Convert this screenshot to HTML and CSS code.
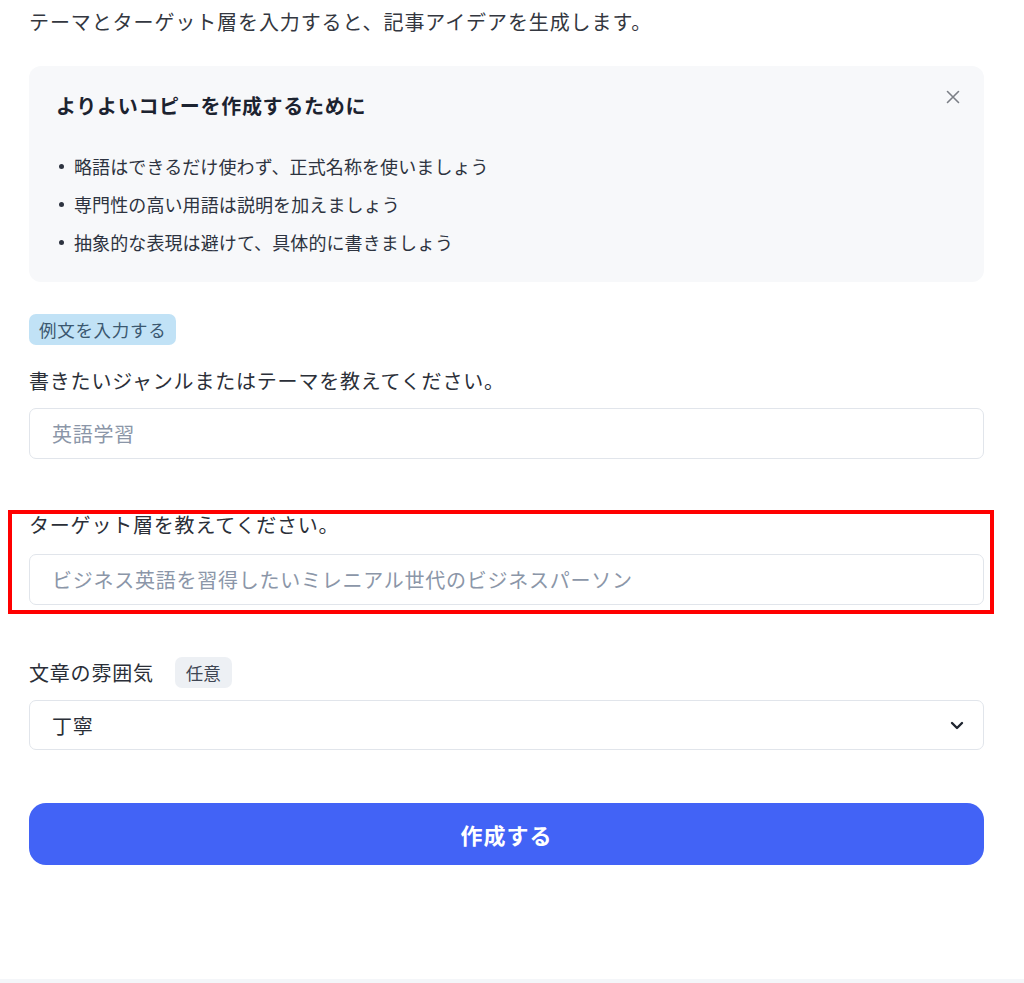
FILE: index.html
```html
<!DOCTYPE html>
<html lang="ja">
<head>
<meta charset="utf-8">
<title>記事アイデア生成</title>
<link rel="stylesheet" href="styles.css">
</head>
<body>
<main class="page">
  <p class="intro">テーマとターゲット層を入力すると、記事アイデアを生成します。</p>

  <section class="tips">
    <h2 class="tips-title">よりよいコピーを作成するために</h2>
    <button class="tips-close" aria-label="閉じる">
      <svg width="14" height="14" viewBox="0 0 14 14"><path d="M1.5 1.5 L12.5 12.5 M12.5 1.5 L1.5 12.5" stroke="#7b7f86" stroke-width="1.6" stroke-linecap="round" fill="none"/></svg>
    </button>
    <ul class="tips-list">
      <li>略語はできるだけ使わず、正式名称を使いましょう</li>
      <li>専門性の高い用語は説明を加えましょう</li>
      <li>抽象的な表現は避けて、具体的に書きましょう</li>
    </ul>
  </section>

  <button class="example-badge">例文を入力する</button>

  <div class="field field-first">
    <label class="label">書きたいジャンルまたはテーマを教えてください。</label>
    <input class="input" type="text" placeholder="英語学習">
  </div>

  <div class="field highlighted">
    <label class="label label-tight">ターゲット層を教えてください。</label>
    <input class="input" type="text" placeholder="ビジネス英語を習得したいミレニアル世代のビジネスパーソン">
  </div>

  <div class="field field-mood">
    <div class="label-row">
      <label class="label">文章の雰囲気</label>
      <span class="optional">任意</span>
    </div>
    <div class="select">
      <span>丁寧</span>
      <svg width="14" height="9" viewBox="0 0 14 9"><path d="M2 2 L7 7 L12 2" stroke="#1f2530" stroke-width="2.4" stroke-linecap="round" stroke-linejoin="round" fill="none"/></svg>
    </div>
  </div>

  <button class="submit">作成する</button>
</main>
<div class="footer-line"></div>
</body>
</html>
```

FILE: styles.css
```css
* { box-sizing: border-box; }

html, body {
  margin: 0;
  padding: 0;
  background: #ffffff;
}

body {
  font-family: "Noto Sans CJK JP", "Noto Sans", sans-serif;
  color: #2d3340;
  height: 983px;
  overflow: hidden;
  display: flex;
  flex-direction: column;
}

.page {
  padding: 0 40px 0 29px;
  display: flex;
  flex-direction: column;
  flex: 1;
}

.intro {
  margin: 7px 0 0;
  font-size: 20px;
  line-height: 30px;
  letter-spacing: 0.9px;
  color: #333740;
}

.tips {
  position: relative;
  margin-top: 29px;
  background: #f7f8fa;
  border-radius: 12px;
  padding: 25px 27px 21px;
}

.tips-title {
  margin: 0;
  font-size: 20px;
  line-height: 30px;
  font-weight: 700;
  letter-spacing: 0.7px;
  color: #1c2330;
}

.tips-close {
  position: absolute;
  top: 24px;
  right: 24px;
  width: 14px;
  height: 14px;
  padding: 0;
  border: 0;
  background: none;
  display: flex;
}

.tips-list {
  list-style: none;
  margin: 26px 0 0;
  padding: 0;
}

.tips-list li {
  position: relative;
  padding-left: 18px;
  font-size: 18px;
  line-height: 38px;
  letter-spacing: 0.1px;
  color: #2d3340;
}

.tips-list li::before {
  content: "";
  position: absolute;
  left: 3px;
  top: 17px;
  width: 5px;
  height: 5px;
  border-radius: 50%;
  background: #2d3340;
}

.example-badge {
  align-self: flex-start;
  margin-top: 32px;
  height: 31px;
  padding: 0 10px;
  border: 0;
  border-radius: 7px;
  background: #c1e2f6;
  color: #3b5870;
  font-family: inherit;
  font-size: 17.5px;
  letter-spacing: 0.7px;
  line-height: 31px;
}

.field {
  display: flex;
  flex-direction: column;
}

.field-first {
  margin-top: 21px;
}

.label {
  font-size: 20px;
  line-height: 30px;
  letter-spacing: 0.8px;
  color: #2b2f38;
  margin-bottom: 12px;
}

.label-tight {
  line-height: 22px;
  margin-bottom: 18px;
}

.input {
  width: 100%;
  height: 51px;
  border: 1px solid #e1e5eb;
  border-radius: 7px;
  padding: 0 22px;
  font-family: inherit;
  font-size: 20px;
  letter-spacing: 0.75px;
  color: #2b2f38;
  background: #fff;
  outline: none;
}

.input::placeholder {
  color: #8b96a8;
}

.highlighted {
  margin: 51px -10px 0 -21px;
  border: 4px solid #ff0000;
  padding: 0 6px 5px 17px;
}

.field-mood {
  margin-top: 43px;
}

.label-row {
  display: flex;
  align-items: center;
  gap: 21px;
  height: 31px;
  margin-bottom: 12px;
}

.label-row .label {
  margin: 0;
}

.optional {
  height: 31px;
  line-height: 31px;
  padding: 0 11px;
  border-radius: 7px;
  background: #edf0f4;
  color: #3f4653;
  font-size: 17.5px;
}

.select {
  height: 50px;
  border: 1px solid #e1e5eb;
  border-radius: 7px;
  padding: 0 19px 0 22px;
  display: flex;
  align-items: center;
  justify-content: space-between;
  font-size: 20px;
  letter-spacing: 0.8px;
  color: #2b2f38;
}

.submit {
  margin-top: 53px;
  height: 62px;
  width: 100%;
  border: 0;
  border-radius: 17px;
  background: #4263f6;
  color: #ffffff;
  font-family: inherit;
  font-size: 22px;
  font-weight: 700;
  letter-spacing: 1px;
}

.footer-line {
  height: 4px;
  background: #f4f6f9;
}
```
